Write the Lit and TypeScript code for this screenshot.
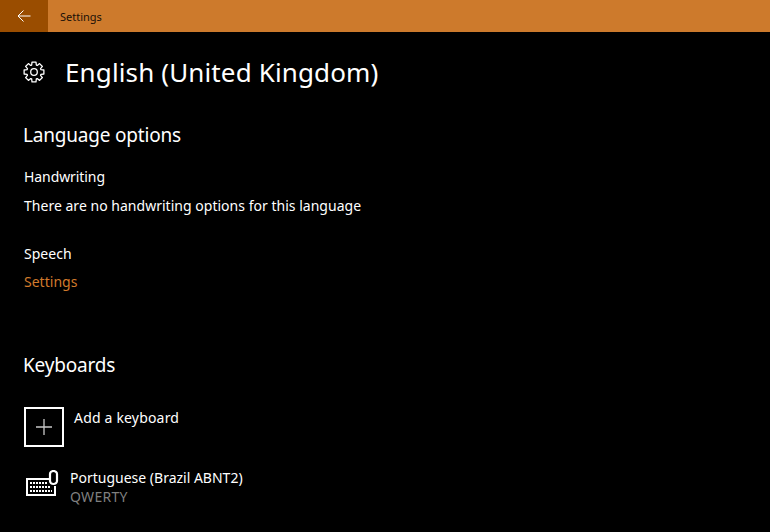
import { LitElement, html, css, svg } from 'lit';
import { customElement } from 'lit/decorators.js';

const gearTeeth = () => {
  // cog outline with 8 teeth around 12,12
  const pts: string[] = [];
  const n = 8;
  for (let i = 0; i < n; i++) {
    const a = (i / n) * Math.PI * 2 - Math.PI / 2;
    const w = 0.2;
    const p = (r: number, t: number) =>
      `${(12 + r * Math.cos(t)).toFixed(2)} ${(12 + r * Math.sin(t)).toFixed(2)}`;
    pts.push(`${i === 0 ? 'M' : 'L'}${p(8, a - w * 1.6)}`);
    pts.push(`L${p(11, a - w)}`);
    pts.push(`L${p(11, a + w)}`);
    pts.push(`L${p(8, a + w * 1.6)}`);
  }
  return pts.join(' ') + ' Z';
};

@customElement('app-root')
export class AppRoot extends LitElement {
  static styles = css`
    :host {
      display: block;
      width: 770px;
      height: 532px;
      overflow: hidden;
      background: #000;
      color: #fff;
      font-family: 'Noto Sans', 'Open Sans', sans-serif;
    }
    .titlebar {
      display: flex;
      align-items: center;
      height: 32px;
      background: #cd7a2c;
      color: #1a1008;
      font-size: 11px;
    }
    .back {
      display: flex;
      align-items: center;
      justify-content: center;
      width: 48px;
      height: 32px;
      background: #9a4d00;
    }
    .titlebar span {
      margin-left: 12px;
    }
    .content {
      display: flex;
      flex-direction: column;
      padding: 0 23px;
    }
    .page-head {
      display: flex;
      align-items: center;
      gap: 20px;
      height: 80px;
    }
    h1 {
      margin: 0;
      font-size: 26px;
      font-weight: 400;
      letter-spacing: 0.13px;
    }
    h2 {
      margin: 0;
      font-size: 19px;
      font-weight: 400;
      line-height: 26px;
      letter-spacing: -0.2px;
    }
    .options {
      margin-top: 10px;
    }
    .line {
      margin-left: 1px;
      font-size: 14px;
      line-height: 28px;
      letter-spacing: 0.02px;
    }
    .first {
      margin: 15px 0 1px 1px;
      letter-spacing: -0.08px;
    }
    .gap {
      margin-top: 20px;
    }
    .link {
      color: #d27a2c;
    }
    .keyboards {
      margin-top: 56px;
    }
    .add {
      display: flex;
      margin: 29px 0 0 1px;
      gap: 10px;
    }
    .plus {
      display: flex;
      align-items: center;
      justify-content: center;
      box-sizing: border-box;
      width: 40px;
      height: 40px;
      border: 2px solid #fff;
    }
    .add-label {
      font-size: 14px;
      line-height: 24px;
      letter-spacing: 0.18px;
      margin-top: -1px;
    }
    .kb {
      display: flex;
      margin: 21px 0 0 3px;
      gap: 11px;
    }
    .kb svg {
      margin-top: 2px;
    }
    .kb-name {
      font-size: 14px;
      line-height: 19px;
      letter-spacing: 0;
    }
    .kb-sub {
      font-size: 14px;
      line-height: 19px;
      letter-spacing: 0.3px;
      color: #7f7f7f;
    }
  `;

  render() {
    return html`
      <div class="titlebar">
        <div class="back">
          <svg width="14" height="14" viewBox="0 0 14 14" fill="none" stroke="#fff" stroke-width="1">
            <path d="M1 7H13.5M6.5 1.5L1 7L6.5 12.5" />
          </svg>
        </div>
        <span>Settings</span>
      </div>
      <div class="content">
        <div class="page-head">
          <svg width="22" height="22" viewBox="0 0 24 24" fill="none" stroke="#fff" stroke-width="1.4" stroke-linejoin="round">
            ${svg`<path d=${gearTeeth()} /><circle cx="12" cy="12" r="3.6" />`}
          </svg>
          <h1>English (United Kingdom)</h1>
        </div>
        <section class="options">
          <h2>Language options</h2>
          <div class="line first">Handwriting</div>
          <div class="line">There are no handwriting options for this language</div>
          <div class="line gap">Speech</div>
          <div class="line link">Settings</div>
        </section>
        <section class="keyboards">
          <h2>Keyboards</h2>
          <div class="add">
            <div class="plus">
              <svg width="16" height="16" viewBox="0 0 16 16" stroke="#c8c8c8" stroke-width="1.3">
                <path d="M8 0V16M0 8H16" />
              </svg>
            </div>
            <div class="add-label">Add a keyboard</div>
          </div>
          <div class="kb">
            <svg width="33" height="27" viewBox="0 0 33 27" fill="none" stroke="#fff">
              <path stroke-width="2" d="M23 9H1V25H29V16" />
              <path stroke-width="2.2" d="M24 11V4a3.5 3 0 0 1 7 0V11a3.5 3 0 0 1-7 0Z" />
              <path stroke-width="2" stroke-dasharray="2 1" d="M4 13H21M4 17H24M4 21H26" />
            </svg>
            <div>
              <div class="kb-name">Portuguese (Brazil ABNT2)</div>
              <div class="kb-sub">QWERTY</div>
            </div>
          </div>
        </section>
      </div>
    `;
  }
}
